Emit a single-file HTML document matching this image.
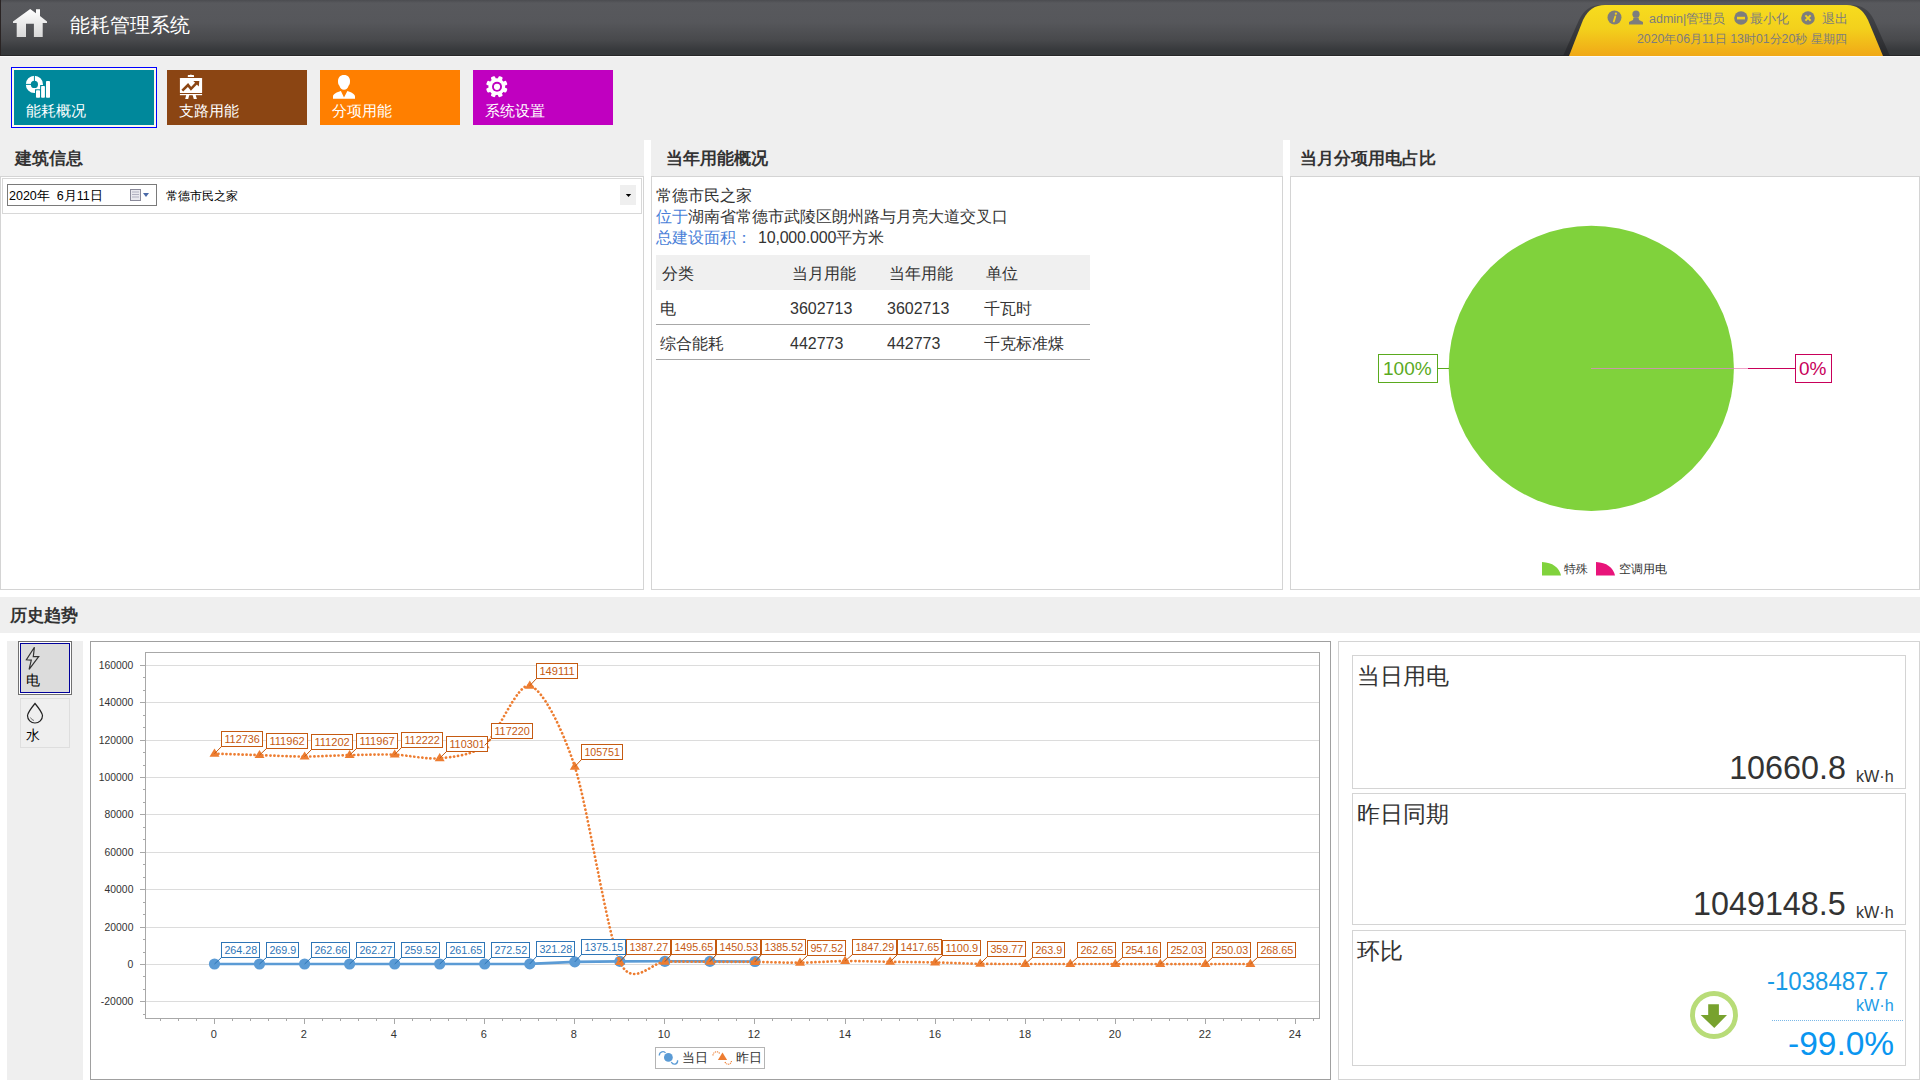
<!DOCTYPE html>
<html><head><meta charset="utf-8">
<style>
*{margin:0;padding:0;box-sizing:border-box}
html,body{width:1920px;height:1080px;overflow:hidden;background:#efefef;font-family:"Liberation Sans",sans-serif;color:#333}
.a{position:absolute}
svg text{font-family:"Liberation Sans",sans-serif}
.hdr{left:0;top:0;width:1920px;height:56px;background:linear-gradient(#4b4c50 0px,#58595d 3px,#56575b 22px,#48494c 40px,#37393c 50px,#35383a 55px,#272728 55px,#272728 56px);border-left:1px solid #2a2424}
.title{left:70px;top:11px;font-size:20px;color:#fff;line-height:28px;white-space:nowrap}
.tile{width:140px;height:55px;color:#fff;font-size:15px}
.tile span{position:absolute;left:12px;top:31px;line-height:20px;white-space:nowrap}
.ptitle{font-size:17px;font-weight:bold;color:#333;line-height:22px;white-space:nowrap}
.panel{background:#fff;border:1px solid #d4d4d4}
.t16{font-size:16px;line-height:21px;white-space:nowrap;color:#333}
.card{background:#fff;border:1px solid #d4d4d4}
.card .lbl{position:absolute;left:4px;top:5px;font-size:23px;line-height:30px;color:#333;white-space:nowrap}
</style></head><body>
<!-- header -->
<div class="a hdr"></div>
<div class="a" style="left:0;top:56px;width:1920px;height:1px;background:#fafafa"></div>
<svg class="a" style="left:12px;top:7px" width="36" height="32" viewBox="0 0 36 32">
<defs><linearGradient id="hg" x1="0" y1="0" x2="0" y2="1"><stop offset="0" stop-color="#ffffff"/><stop offset="1" stop-color="#d8d8d8"/></linearGradient></defs>
<path d="M1,14.5 L18.2,1.9 L24,6.2 L24,2.2 L28,2.2 L28,9.1 L35,14.5 L35,16 L30.7,16 L30.7,30 L21.9,30 L21.9,16.8 L14,16.8 L14,30 L4.7,30 L4.7,16 L1,16 Z" fill="url(#hg)"/>
</svg>
<div class="a title">能耗管理系统</div>
<!-- yellow tab -->
<svg class="a" style="left:1555px;top:0" width="340" height="56" viewBox="0 0 340 56">
<defs>
<linearGradient id="yg" x1="0" y1="0" x2="0" y2="1"><stop offset="0" stop-color="#f7dc1e"/><stop offset="0.45" stop-color="#f3d11c"/><stop offset="1" stop-color="#f0a817"/></linearGradient>
<linearGradient id="sg" x1="0" y1="0" x2="0" y2="1"><stop offset="0" stop-color="#3c3d41"/><stop offset="1" stop-color="#222326"/></linearGradient>
</defs>
<path d="M8,56 L24,20 Q31,5 46,5 L296,5 Q312,5 319,20 L335,56 Z" fill="url(#sg)" opacity="0.7"/>
<path d="M14,56 L28,20 Q35,5 50,5 L292,5 Q306,5 313,20 L328,56 Z" fill="url(#yg)"/>
</svg>
<!-- tab icons & text -->
<svg class="a" style="left:1607px;top:10px" width="15" height="15" viewBox="0 0 15 15"><circle cx="7.5" cy="7.5" r="7" fill="#7d7d7d"/><circle cx="8.9" cy="3.7" r="1.15" fill="#f3d11c"/><path d="M8.3,6.4 L6.8,11.4" stroke="#f3d11c" stroke-width="1.8" stroke-linecap="round"/></svg>
<svg class="a" style="left:1628px;top:10px" width="16" height="15" viewBox="0 0 16 15"><circle cx="8" cy="4.2" r="3.6" fill="#7d7d7d"/><path d="M5.5,7.5 L10.5,7.5 L11,10 L15,12 L15,14.5 L1,14.5 L1,12 L5,10 Z" fill="#7d7d7d"/></svg>
<div class="a" style="left:1649px;top:11px;font-size:12.5px;line-height:17px;color:#7d7d7d;white-space:nowrap">admin|管理员</div>
<svg class="a" style="left:1734px;top:11px" width="14" height="14" viewBox="0 0 14 14"><circle cx="7" cy="7" r="6.8" fill="#7d7d7d"/><rect x="3" y="5.8" width="8" height="2.6" fill="#f3d11c"/></svg>
<div class="a" style="left:1750px;top:11px;font-size:12.5px;line-height:17px;color:#7d7d7d;white-space:nowrap">最小化</div>
<svg class="a" style="left:1801px;top:11px" width="14" height="14" viewBox="0 0 14 14"><circle cx="7" cy="7" r="6.8" fill="#7d7d7d"/><path d="M4.4,4.4 L9.6,9.6 M9.6,4.4 L4.4,9.6" stroke="#f3d11c" stroke-width="2"/></svg>
<div class="a" style="left:1822px;top:11px;font-size:12.5px;line-height:17px;color:#7d7d7d;white-space:nowrap">退出</div>
<div class="a" style="left:1637px;top:31px;font-size:12.3px;line-height:17px;color:#7d7d7d;white-space:nowrap">2020年06月11日 13时01分20秒 星期四</div>

<!-- tiles -->
<div class="a" style="left:11px;top:67px;width:146px;height:61px;border:1px solid #0000ff;background:#fcfaec"></div>
<div class="a tile" style="left:14px;top:70px;background:#00889b">
<svg class="a" style="left:0;top:0" width="40" height="30" viewBox="0 0 40 30">
<circle cx="20.4" cy="14.4" r="6.1" fill="none" stroke="#fff" stroke-width="5"/>
<rect x="19.9" y="5" width="1" height="6" fill="#00889b"/>
<rect x="11" y="13.9" width="6" height="1" fill="#00889b"/>
<rect x="21" y="19.3" width="16" height="10" fill="#00889b"/>
<rect x="26.1" y="15" width="11" height="5" fill="#00889b"/>
<rect x="31" y="10" width="6" height="6" fill="#00889b"/>
<rect x="22" y="20.3" width="4" height="7.5" rx="0.8" fill="#fff"/><rect x="27.1" y="16" width="3.8" height="11.8" rx="0.8" fill="#fff"/><rect x="32" y="11" width="4" height="16.8" rx="0.8" fill="#fff"/>
</svg>
<span>能耗概况</span></div>
<div class="a tile" style="left:167px;top:70px;background:#8b4513">
<svg class="a" style="left:0;top:0" width="40" height="32" viewBox="0 0 40 32">
<g fill="#fff">
<path d="M20.8,7 L20.8,5.6 Q20.8,5 21.4,5 L22.8,5 Q23.9,3.8 25,5 L26.4,5 Q27,5 27,5.6 L27,7 Z"/>
<rect x="12.9" y="7.9" width="22.2" height="15.1" rx="0.6"/>
<rect x="12.9" y="24" width="22.2" height="1.2"/>
<path d="M19.2,25 L22.3,25 L21.2,29 L18.2,29 Z M25.6,25 L28.7,25 L29.9,29 L26.8,29 Z"/>
</g>
<path d="M15.3,20.6 L21,15 L24,18.8 L29.5,13.2" fill="none" stroke="#8b4513" stroke-width="2.6" stroke-linejoin="miter"/>
<path d="M26.3,10.9 L32.3,10.9 L31.8,16.6 Z" fill="#8b4513"/>
</svg>

<span>支路用能</span></div>
<div class="a tile" style="left:320px;top:70px;background:#ff7f00">
<svg class="a" style="left:0;top:0" width="40" height="32" viewBox="0 0 40 32">
<path d="M24,4.9 C28,4.9 30,7.5 30,11 C30,13 29.8,14.5 28.6,15.8 C27.8,18.4 26.2,19.8 24,19.8 C21.8,19.8 20.2,18.4 19.4,15.8 C18.2,14.5 18,13 18,11 C18,7.5 20,4.9 24,4.9 Z" fill="#fff"/>
<path d="M20.9,21 L24,27.5 L27.4,21 C31,22 35,24 35,26.5 L35,28.8 L13,28.8 L13,26.5 C13,24 17,22 20.9,21 Z" fill="#fff"/>
</svg>

<span>分项用能</span></div>
<div class="a tile" style="left:473px;top:70px;background:#c000c0">
<svg class="a" style="left:0;top:0" width="40" height="32" viewBox="0 0 40 32">
<g fill="#fff"><circle cx="23.8" cy="16.7" r="8.4"/><rect x="21.6" y="5.9" width="4.4" height="5" rx="1.2" transform="rotate(22.5 23.8 16.7)"/><rect x="21.6" y="5.9" width="4.4" height="5" rx="1.2" transform="rotate(67.5 23.8 16.7)"/><rect x="21.6" y="5.9" width="4.4" height="5" rx="1.2" transform="rotate(112.5 23.8 16.7)"/><rect x="21.6" y="5.9" width="4.4" height="5" rx="1.2" transform="rotate(157.5 23.8 16.7)"/><rect x="21.6" y="5.9" width="4.4" height="5" rx="1.2" transform="rotate(202.5 23.8 16.7)"/><rect x="21.6" y="5.9" width="4.4" height="5" rx="1.2" transform="rotate(247.5 23.8 16.7)"/><rect x="21.6" y="5.9" width="4.4" height="5" rx="1.2" transform="rotate(292.5 23.8 16.7)"/><rect x="21.6" y="5.9" width="4.4" height="5" rx="1.2" transform="rotate(337.5 23.8 16.7)"/></g>
<circle cx="24" cy="16.8" r="5" fill="#c000c0"/><circle cx="24" cy="16.8" r="3.1" fill="#fff"/>
</svg>

<span>系统设置</span></div>

<!-- white area behind panels -->
<div class="a" style="left:0;top:176px;width:1920px;height:421px;background:#fff"></div>
<div class="a" style="left:644px;top:140px;width:7px;height:457px;background:#fff"></div>
<div class="a" style="left:1283px;top:140px;width:7px;height:457px;background:#fff"></div>

<!-- panel titles -->
<div class="a ptitle" style="left:15px;top:148px">建筑信息</div>
<div class="a ptitle" style="left:666px;top:148px">当年用能概况</div>
<div class="a ptitle" style="left:1300px;top:148px">当月分项用电占比</div>

<!-- panels -->
<div class="a panel" style="left:0;top:176px;width:644px;height:414px"></div>
<div class="a panel" style="left:651px;top:176px;width:632px;height:414px"></div>
<div class="a panel" style="left:1290px;top:176px;width:630px;height:414px"></div>

<!-- left panel content -->
<div class="a" style="left:2px;top:178px;width:640px;height:36px;border:1px solid #d8d8d8;background:#fff"></div>
<div class="a" style="left:7px;top:184px;width:150px;height:22px;border:1px solid #7a7a7a;background:#fff"></div>
<div class="a" style="left:9px;top:188px;font-size:12.5px;line-height:17px;color:#000;white-space:nowrap">2020年&nbsp; 6月11日</div>
<svg class="a" style="left:129px;top:188px" width="22" height="14" viewBox="0 0 22 14"><rect x="1.5" y="1.5" width="10" height="11" fill="#e8e8ee" stroke="#8a8a9a"/><path d="M3,4 h7 M3,6.5 h7 M3,9 h7" stroke="#b0b0c0"/><path d="M14,5 L20,5 L17,9 Z" fill="#4a6aa8"/></svg>
<div class="a" style="left:166px;top:188px;font-size:12px;line-height:17px;color:#000;white-space:nowrap">常德市民之家</div>
<div class="a" style="left:620px;top:185px;width:16px;height:20px;background:#efefef"></div>
<svg class="a" style="left:625px;top:193px" width="8" height="5" viewBox="0 0 8 5"><path d="M0.8,0.9 L6.2,0.9 L3.5,3.9 Z" fill="#000"/></svg>

<!-- middle panel content -->
<div class="a t16" style="left:656px;top:185px">常德市民之家</div>
<div class="a t16" style="left:656px;top:206px"><span style="color:#4a7fd8">位于</span>湖南省常德市武陵区朗州路与月亮大道交叉口</div>
<div class="a t16" style="left:656px;top:227px"><span style="color:#4a7fd8">总建设面积：</span></div><div class="a t16" style="left:758px;top:227px;letter-spacing:-0.2px">10,000.000平方米</div>
<div class="a" style="left:656px;top:255px;width:434px;height:35px;background:#f0f0f0"></div>
<div class="a" style="left:656px;top:324px;width:434px;height:1px;background:#a8a8a8"></div>
<div class="a" style="left:656px;top:359px;width:434px;height:1px;background:#a8a8a8"></div>
<div class="a t16" style="left:662px;top:263px">分类</div>
<div class="a t16" style="left:792px;top:263px">当月用能</div>
<div class="a t16" style="left:889px;top:263px">当年用能</div>
<div class="a t16" style="left:986px;top:263px">单位</div>
<div class="a t16" style="left:660px;top:298px">电</div>
<div class="a t16" style="left:790px;top:298px">3602713</div>
<div class="a t16" style="left:887px;top:298px">3602713</div>
<div class="a t16" style="left:984px;top:298px">千瓦时</div>
<div class="a t16" style="left:660px;top:333px">综合能耗</div>
<div class="a t16" style="left:790px;top:333px">442773</div>
<div class="a t16" style="left:887px;top:333px">442773</div>
<div class="a t16" style="left:984px;top:333px">千克标准煤</div>

<!-- pie panel content -->
<svg class="a" style="left:1291px;top:177px" width="628" height="412" viewBox="1291 177 628 412">
<circle cx="1591.3" cy="368.4" r="142.6" fill="#80d23c"/>
<line x1="1591" y1="368.5" x2="1734" y2="368.5" stroke="#c89aa8" stroke-width="1"/>
<line x1="1734" y1="368.5" x2="1748" y2="368.5" stroke="#f0a0c8" stroke-width="1"/>
<line x1="1748" y1="368.5" x2="1796" y2="368.5" stroke="#c8005a" stroke-width="1"/>
<line x1="1437" y1="368.5" x2="1449" y2="368.5" stroke="#5aaa1e" stroke-width="1"/>
<rect x="1378.5" y="354.5" width="59" height="28" fill="#fff" stroke="#5aaa1e"/>
<text x="1383" y="375" font-size="19" fill="#5aaa1e">100%</text>
<rect x="1795.5" y="354.5" width="36" height="28" fill="#fff" stroke="#c8005a"/>
<text x="1799" y="375" font-size="19" fill="#c8005a">0%</text>
<path d="M1542,562 Q1558,563 1561,575.5 L1542,575.5 Z" fill="#80d23c"/>
<path d="M1596,562 Q1612,563 1615,575.5 L1596,575.5 Z" fill="#e8147a"/>
<text x="1564" y="573" font-size="12" fill="#333">特殊</text>
<text x="1619" y="573" font-size="12" fill="#333">空调用电</text>
</svg>

<!-- history header -->
<div class="a" style="left:0;top:633px;width:1920px;height:447px;background:#fff"></div>
<div class="a ptitle" style="left:10px;top:605px">历史趋势</div>

<!-- sidebar -->
<div class="a" style="left:7px;top:641px;width:76px;height:439px;background:#efefef"></div>
<div class="a" style="left:18px;top:641px;width:54px;height:54px;border:1px solid #707070;background:#fff"></div>
<div class="a" style="left:20px;top:643px;width:50px;height:50px;border:1px solid #00009a;background:#dcdcdc"></div>
<svg class="a" style="left:25px;top:646px" width="16" height="26" viewBox="0 0 16 26"><path d="M9.4,1.3 L1.4,13.8 L6.3,14.1 L4.1,23.3 L13.7,10.7 L8.3,10.6 Z" fill="none" stroke="#333" stroke-width="1.2" stroke-linejoin="miter"/></svg>
<div class="a" style="left:26px;top:671.5px;font-size:13.5px;line-height:17px;color:#000">电</div>
<div class="a" style="left:20px;top:698px;width:50px;height:50px;border:1px solid #dedede;background:#efefef"></div>
<svg class="a" style="left:25px;top:702px" width="20" height="22" viewBox="0 0 20 22"><path d="M10,1.5 Q3,10 2.5,13.5 A7.5,7.5 0 0 0 17.5,13.5 Q17,10 10,1.5 Z" fill="none" stroke="#222" stroke-width="1.2"/><path d="M5.5,15.5 Q6.5,18 9,18.5" fill="none" stroke="#555" stroke-width="0.8"/></svg>
<div class="a" style="left:26px;top:726.5px;font-size:13.5px;line-height:17px;color:#000">水</div>

<!-- chart -->
<div class="a" style="left:90px;top:641px;width:1241px;height:439px;border:1px solid #a0a0a0;background:#fff"></div>
<svg width="1241" height="439" viewBox="90 641 1241 439" style="position:absolute;left:90px;top:641px">
<rect x="145.5" y="652.5" width="1174" height="366" fill="#fff" stroke="#a8a8a8" stroke-width="1"/>
<line x1="146" y1="1001.5" x2="1319" y2="1001.5" stroke="#dcdcdc" stroke-width="1"/>
<line x1="140" y1="1001.5" x2="145" y2="1001.5" stroke="#a8a8a8" stroke-width="1"/>
<text x="100.8" y="1005.3" font-size="11" fill="#333" textLength="32.5" lengthAdjust="spacingAndGlyphs">-20000</text>
<line x1="146" y1="964.5" x2="1319" y2="964.5" stroke="#dcdcdc" stroke-width="1"/>
<line x1="140" y1="964.5" x2="145" y2="964.5" stroke="#a8a8a8" stroke-width="1"/>
<text x="127.6" y="968.3" font-size="11" fill="#333" textLength="5.8" lengthAdjust="spacingAndGlyphs">0</text>
<line x1="146" y1="927.5" x2="1319" y2="927.5" stroke="#dcdcdc" stroke-width="1"/>
<line x1="140" y1="927.5" x2="145" y2="927.5" stroke="#a8a8a8" stroke-width="1"/>
<text x="104.6" y="931.3" font-size="11" fill="#333" textLength="28.8" lengthAdjust="spacingAndGlyphs">20000</text>
<line x1="146" y1="889.5" x2="1319" y2="889.5" stroke="#dcdcdc" stroke-width="1"/>
<line x1="140" y1="889.5" x2="145" y2="889.5" stroke="#a8a8a8" stroke-width="1"/>
<text x="104.6" y="893.3" font-size="11" fill="#333" textLength="28.8" lengthAdjust="spacingAndGlyphs">40000</text>
<line x1="146" y1="852.5" x2="1319" y2="852.5" stroke="#dcdcdc" stroke-width="1"/>
<line x1="140" y1="852.5" x2="145" y2="852.5" stroke="#a8a8a8" stroke-width="1"/>
<text x="104.6" y="856.3" font-size="11" fill="#333" textLength="28.8" lengthAdjust="spacingAndGlyphs">60000</text>
<line x1="146" y1="814.5" x2="1319" y2="814.5" stroke="#dcdcdc" stroke-width="1"/>
<line x1="140" y1="814.5" x2="145" y2="814.5" stroke="#a8a8a8" stroke-width="1"/>
<text x="104.6" y="818.3" font-size="11" fill="#333" textLength="28.8" lengthAdjust="spacingAndGlyphs">80000</text>
<line x1="146" y1="777.5" x2="1319" y2="777.5" stroke="#dcdcdc" stroke-width="1"/>
<line x1="140" y1="777.5" x2="145" y2="777.5" stroke="#a8a8a8" stroke-width="1"/>
<text x="98.8" y="781.3" font-size="11" fill="#333" textLength="34.5" lengthAdjust="spacingAndGlyphs">100000</text>
<line x1="146" y1="740.5" x2="1319" y2="740.5" stroke="#dcdcdc" stroke-width="1"/>
<line x1="140" y1="740.5" x2="145" y2="740.5" stroke="#a8a8a8" stroke-width="1"/>
<text x="98.8" y="744.3" font-size="11" fill="#333" textLength="34.5" lengthAdjust="spacingAndGlyphs">120000</text>
<line x1="146" y1="702.5" x2="1319" y2="702.5" stroke="#dcdcdc" stroke-width="1"/>
<line x1="140" y1="702.5" x2="145" y2="702.5" stroke="#a8a8a8" stroke-width="1"/>
<text x="98.8" y="706.3" font-size="11" fill="#333" textLength="34.5" lengthAdjust="spacingAndGlyphs">140000</text>
<line x1="146" y1="665.5" x2="1319" y2="665.5" stroke="#dcdcdc" stroke-width="1"/>
<line x1="140" y1="665.5" x2="145" y2="665.5" stroke="#a8a8a8" stroke-width="1"/>
<text x="98.8" y="669.3" font-size="11" fill="#333" textLength="34.5" lengthAdjust="spacingAndGlyphs">160000</text>
<line x1="143" y1="1014.5" x2="145" y2="1014.5" stroke="#a8a8a8"/>
<line x1="143" y1="989.5" x2="145" y2="989.5" stroke="#a8a8a8"/>
<line x1="143" y1="976.5" x2="145" y2="976.5" stroke="#a8a8a8"/>
<line x1="143" y1="952.5" x2="145" y2="952.5" stroke="#a8a8a8"/>
<line x1="143" y1="939.5" x2="145" y2="939.5" stroke="#a8a8a8"/>
<line x1="143" y1="914.5" x2="145" y2="914.5" stroke="#a8a8a8"/>
<line x1="143" y1="902.5" x2="145" y2="902.5" stroke="#a8a8a8"/>
<line x1="143" y1="877.5" x2="145" y2="877.5" stroke="#a8a8a8"/>
<line x1="143" y1="864.5" x2="145" y2="864.5" stroke="#a8a8a8"/>
<line x1="143" y1="839.5" x2="145" y2="839.5" stroke="#a8a8a8"/>
<line x1="143" y1="827.5" x2="145" y2="827.5" stroke="#a8a8a8"/>
<line x1="143" y1="802.5" x2="145" y2="802.5" stroke="#a8a8a8"/>
<line x1="143" y1="789.5" x2="145" y2="789.5" stroke="#a8a8a8"/>
<line x1="143" y1="765.5" x2="145" y2="765.5" stroke="#a8a8a8"/>
<line x1="143" y1="752.5" x2="145" y2="752.5" stroke="#a8a8a8"/>
<line x1="143" y1="727.5" x2="145" y2="727.5" stroke="#a8a8a8"/>
<line x1="143" y1="715.5" x2="145" y2="715.5" stroke="#a8a8a8"/>
<line x1="143" y1="690.5" x2="145" y2="690.5" stroke="#a8a8a8"/>
<line x1="143" y1="677.5" x2="145" y2="677.5" stroke="#a8a8a8"/>
<line x1="160.5" y1="1018" x2="160.5" y2="1021" stroke="#a8a8a8"/>
<line x1="178.5" y1="1018" x2="178.5" y2="1021" stroke="#a8a8a8"/>
<line x1="196.5" y1="1018" x2="196.5" y2="1021" stroke="#a8a8a8"/>
<line x1="214.5" y1="1018" x2="214.5" y2="1024" stroke="#a8a8a8"/>
<text x="213.9" y="1038" text-anchor="middle" font-size="11" fill="#333">0</text>
<line x1="232.5" y1="1018" x2="232.5" y2="1021" stroke="#a8a8a8"/>
<line x1="250.5" y1="1018" x2="250.5" y2="1021" stroke="#a8a8a8"/>
<line x1="268.5" y1="1018" x2="268.5" y2="1021" stroke="#a8a8a8"/>
<line x1="286.5" y1="1018" x2="286.5" y2="1021" stroke="#a8a8a8"/>
<line x1="304.5" y1="1018" x2="304.5" y2="1024" stroke="#a8a8a8"/>
<text x="303.9" y="1038" text-anchor="middle" font-size="11" fill="#333">2</text>
<line x1="322.5" y1="1018" x2="322.5" y2="1021" stroke="#a8a8a8"/>
<line x1="340.5" y1="1018" x2="340.5" y2="1021" stroke="#a8a8a8"/>
<line x1="358.5" y1="1018" x2="358.5" y2="1021" stroke="#a8a8a8"/>
<line x1="376.5" y1="1018" x2="376.5" y2="1021" stroke="#a8a8a8"/>
<line x1="394.5" y1="1018" x2="394.5" y2="1024" stroke="#a8a8a8"/>
<text x="393.9" y="1038" text-anchor="middle" font-size="11" fill="#333">4</text>
<line x1="412.5" y1="1018" x2="412.5" y2="1021" stroke="#a8a8a8"/>
<line x1="430.5" y1="1018" x2="430.5" y2="1021" stroke="#a8a8a8"/>
<line x1="448.5" y1="1018" x2="448.5" y2="1021" stroke="#a8a8a8"/>
<line x1="466.5" y1="1018" x2="466.5" y2="1021" stroke="#a8a8a8"/>
<line x1="484.5" y1="1018" x2="484.5" y2="1024" stroke="#a8a8a8"/>
<text x="483.9" y="1038" text-anchor="middle" font-size="11" fill="#333">6</text>
<line x1="502.5" y1="1018" x2="502.5" y2="1021" stroke="#a8a8a8"/>
<line x1="520.5" y1="1018" x2="520.5" y2="1021" stroke="#a8a8a8"/>
<line x1="538.5" y1="1018" x2="538.5" y2="1021" stroke="#a8a8a8"/>
<line x1="556.5" y1="1018" x2="556.5" y2="1021" stroke="#a8a8a8"/>
<line x1="574.5" y1="1018" x2="574.5" y2="1024" stroke="#a8a8a8"/>
<text x="573.9" y="1038" text-anchor="middle" font-size="11" fill="#333">8</text>
<line x1="592.5" y1="1018" x2="592.5" y2="1021" stroke="#a8a8a8"/>
<line x1="610.5" y1="1018" x2="610.5" y2="1021" stroke="#a8a8a8"/>
<line x1="628.5" y1="1018" x2="628.5" y2="1021" stroke="#a8a8a8"/>
<line x1="646.5" y1="1018" x2="646.5" y2="1021" stroke="#a8a8a8"/>
<line x1="664.5" y1="1018" x2="664.5" y2="1024" stroke="#a8a8a8"/>
<text x="663.9" y="1038" text-anchor="middle" font-size="11" fill="#333">10</text>
<line x1="682.5" y1="1018" x2="682.5" y2="1021" stroke="#a8a8a8"/>
<line x1="700.5" y1="1018" x2="700.5" y2="1021" stroke="#a8a8a8"/>
<line x1="718.5" y1="1018" x2="718.5" y2="1021" stroke="#a8a8a8"/>
<line x1="736.5" y1="1018" x2="736.5" y2="1021" stroke="#a8a8a8"/>
<line x1="754.5" y1="1018" x2="754.5" y2="1024" stroke="#a8a8a8"/>
<text x="753.9" y="1038" text-anchor="middle" font-size="11" fill="#333">12</text>
<line x1="772.5" y1="1018" x2="772.5" y2="1021" stroke="#a8a8a8"/>
<line x1="791.5" y1="1018" x2="791.5" y2="1021" stroke="#a8a8a8"/>
<line x1="809.5" y1="1018" x2="809.5" y2="1021" stroke="#a8a8a8"/>
<line x1="827.5" y1="1018" x2="827.5" y2="1021" stroke="#a8a8a8"/>
<line x1="845.5" y1="1018" x2="845.5" y2="1024" stroke="#a8a8a8"/>
<text x="844.9" y="1038" text-anchor="middle" font-size="11" fill="#333">14</text>
<line x1="863.5" y1="1018" x2="863.5" y2="1021" stroke="#a8a8a8"/>
<line x1="881.5" y1="1018" x2="881.5" y2="1021" stroke="#a8a8a8"/>
<line x1="899.5" y1="1018" x2="899.5" y2="1021" stroke="#a8a8a8"/>
<line x1="917.5" y1="1018" x2="917.5" y2="1021" stroke="#a8a8a8"/>
<line x1="935.5" y1="1018" x2="935.5" y2="1024" stroke="#a8a8a8"/>
<text x="934.9" y="1038" text-anchor="middle" font-size="11" fill="#333">16</text>
<line x1="953.5" y1="1018" x2="953.5" y2="1021" stroke="#a8a8a8"/>
<line x1="971.5" y1="1018" x2="971.5" y2="1021" stroke="#a8a8a8"/>
<line x1="989.5" y1="1018" x2="989.5" y2="1021" stroke="#a8a8a8"/>
<line x1="1007.5" y1="1018" x2="1007.5" y2="1021" stroke="#a8a8a8"/>
<line x1="1025.5" y1="1018" x2="1025.5" y2="1024" stroke="#a8a8a8"/>
<text x="1024.9" y="1038" text-anchor="middle" font-size="11" fill="#333">18</text>
<line x1="1043.5" y1="1018" x2="1043.5" y2="1021" stroke="#a8a8a8"/>
<line x1="1061.5" y1="1018" x2="1061.5" y2="1021" stroke="#a8a8a8"/>
<line x1="1079.5" y1="1018" x2="1079.5" y2="1021" stroke="#a8a8a8"/>
<line x1="1097.5" y1="1018" x2="1097.5" y2="1021" stroke="#a8a8a8"/>
<line x1="1115.5" y1="1018" x2="1115.5" y2="1024" stroke="#a8a8a8"/>
<text x="1114.9" y="1038" text-anchor="middle" font-size="11" fill="#333">20</text>
<line x1="1133.5" y1="1018" x2="1133.5" y2="1021" stroke="#a8a8a8"/>
<line x1="1151.5" y1="1018" x2="1151.5" y2="1021" stroke="#a8a8a8"/>
<line x1="1169.5" y1="1018" x2="1169.5" y2="1021" stroke="#a8a8a8"/>
<line x1="1187.5" y1="1018" x2="1187.5" y2="1021" stroke="#a8a8a8"/>
<line x1="1205.5" y1="1018" x2="1205.5" y2="1024" stroke="#a8a8a8"/>
<text x="1204.9" y="1038" text-anchor="middle" font-size="11" fill="#333">22</text>
<line x1="1223.5" y1="1018" x2="1223.5" y2="1021" stroke="#a8a8a8"/>
<line x1="1241.5" y1="1018" x2="1241.5" y2="1021" stroke="#a8a8a8"/>
<line x1="1259.5" y1="1018" x2="1259.5" y2="1021" stroke="#a8a8a8"/>
<line x1="1277.5" y1="1018" x2="1277.5" y2="1021" stroke="#a8a8a8"/>
<line x1="1295.5" y1="1018" x2="1295.5" y2="1024" stroke="#a8a8a8"/>
<text x="1294.9" y="1038" text-anchor="middle" font-size="11" fill="#333">24</text>
<line x1="1313.5" y1="1018" x2="1313.5" y2="1021" stroke="#a8a8a8"/>
<polyline points="214.5,964.0 259.5,964.0 304.6,964.0 349.6,964.0 394.7,964.0 439.7,964.0 484.7,964.0 529.8,963.9 574.8,961.9 619.9,961.4 664.9,961.3 709.9,961.4 755.0,961.5" fill="none" stroke="#5b9bd5" stroke-width="2.6"/>
<circle cx="214.5" cy="964.0" r="5.6" fill="#5b9bd5"/>
<circle cx="259.5" cy="964.0" r="5.6" fill="#5b9bd5"/>
<circle cx="304.6" cy="964.0" r="5.6" fill="#5b9bd5"/>
<circle cx="349.6" cy="964.0" r="5.6" fill="#5b9bd5"/>
<circle cx="394.7" cy="964.0" r="5.6" fill="#5b9bd5"/>
<circle cx="439.7" cy="964.0" r="5.6" fill="#5b9bd5"/>
<circle cx="484.7" cy="964.0" r="5.6" fill="#5b9bd5"/>
<circle cx="529.8" cy="963.9" r="5.6" fill="#5b9bd5"/>
<circle cx="574.8" cy="961.9" r="5.6" fill="#5b9bd5"/>
<circle cx="619.9" cy="961.4" r="5.6" fill="#5b9bd5"/>
<circle cx="664.9" cy="961.3" r="5.6" fill="#5b9bd5"/>
<circle cx="709.9" cy="961.4" r="5.6" fill="#5b9bd5"/>
<circle cx="755.0" cy="961.5" r="5.6" fill="#5b9bd5"/>
<path d="M214.50,753.68 C220.81,753.89 246.93,754.73 259.54,755.13 C272.15,755.53 291.97,756.55 304.58,756.55 C317.19,756.55 337.01,755.39 349.62,755.12 C362.23,754.85 382.05,754.21 394.66,754.64 C407.27,755.08 427.09,759.55 439.70,758.24 C452.31,756.93 472.13,755.46 484.74,745.30 C497.35,735.14 517.17,682.66 529.78,685.66 C542.39,688.67 562.21,728.07 574.82,766.75 C587.43,805.42 607.25,934.61 619.86,961.91 C632.47,989.20 652.29,961.72 664.90,961.70 C677.51,961.69 697.33,961.76 709.94,961.79 C722.55,961.82 742.37,961.78 754.98,961.91 C767.59,962.04 787.41,962.83 800.02,962.71 C812.63,962.59 832.45,961.17 845.06,961.05 C857.67,960.93 877.49,961.65 890.10,961.85 C902.71,962.04 922.53,962.16 935.14,962.44 C947.75,962.72 967.57,963.61 980.18,963.83 C992.79,964.05 1012.61,963.98 1025.22,964.01 C1037.83,964.03 1057.65,964.01 1070.26,964.01 C1082.87,964.01 1102.69,964.02 1115.30,964.02 C1127.91,964.03 1147.73,964.03 1160.34,964.03 C1172.95,964.03 1192.77,964.04 1205.38,964.03 C1217.99,964.03 1244.11,964.00 1250.42,964.00" fill="none" stroke="#ed7d31" stroke-width="2.7" stroke-dasharray="0.1 3.9" stroke-linecap="round"/>
<polygon points="214.5,748.5 209.5,756.7 219.5,756.7" fill="#ed7d31"/>
<polygon points="259.5,749.9 254.5,758.1 264.5,758.1" fill="#ed7d31"/>
<polygon points="304.6,751.4 299.6,759.6 309.6,759.6" fill="#ed7d31"/>
<polygon points="349.6,749.9 344.6,758.1 354.6,758.1" fill="#ed7d31"/>
<polygon points="394.7,749.4 389.7,757.6 399.7,757.6" fill="#ed7d31"/>
<polygon points="439.7,753.0 434.7,761.2 444.7,761.2" fill="#ed7d31"/>
<polygon points="484.7,740.1 479.7,748.3 489.7,748.3" fill="#ed7d31"/>
<polygon points="529.8,680.5 524.8,688.7 534.8,688.7" fill="#ed7d31"/>
<polygon points="574.8,761.5 569.8,769.7 579.8,769.7" fill="#ed7d31"/>
<polygon points="619.9,956.7 614.9,964.9 624.9,964.9" fill="#ed7d31"/>
<polygon points="664.9,956.5 659.9,964.7 669.9,964.7" fill="#ed7d31"/>
<polygon points="709.9,956.6 704.9,964.8 714.9,964.8" fill="#ed7d31"/>
<polygon points="755.0,956.7 750.0,964.9 760.0,964.9" fill="#ed7d31"/>
<polygon points="800.0,957.5 795.0,965.7 805.0,965.7" fill="#ed7d31"/>
<polygon points="845.1,955.8 840.1,964.0 850.1,964.0" fill="#ed7d31"/>
<polygon points="890.1,956.6 885.1,964.8 895.1,964.8" fill="#ed7d31"/>
<polygon points="935.1,957.2 930.1,965.4 940.1,965.4" fill="#ed7d31"/>
<polygon points="980.2,958.6 975.2,966.8 985.2,966.8" fill="#ed7d31"/>
<polygon points="1025.2,958.8 1020.2,967.0 1030.2,967.0" fill="#ed7d31"/>
<polygon points="1070.3,958.8 1065.3,967.0 1075.3,967.0" fill="#ed7d31"/>
<polygon points="1115.3,958.8 1110.3,967.0 1120.3,967.0" fill="#ed7d31"/>
<polygon points="1160.3,958.8 1155.3,967.0 1165.3,967.0" fill="#ed7d31"/>
<polygon points="1205.4,958.8 1200.4,967.0 1210.4,967.0" fill="#ed7d31"/>
<polygon points="1250.4,958.8 1245.4,967.0 1255.4,967.0" fill="#ed7d31"/>
<line x1="214.5" y1="964.0" x2="221.5" y2="957.5" stroke="#2e75b6" stroke-width="1"/>
<rect x="221.5" y="942.5" width="38" height="15" fill="#fff" stroke="#2e75b6" stroke-width="1"/>
<text x="224.4" y="954.0" font-size="11" fill="#2e75b6" textLength="32.8" lengthAdjust="spacingAndGlyphs">264.28</text>
<line x1="259.5" y1="964.0" x2="266.5" y2="957.5" stroke="#2e75b6" stroke-width="1"/>
<rect x="266.5" y="942.5" width="32" height="15" fill="#fff" stroke="#2e75b6" stroke-width="1"/>
<text x="269.4" y="954.0" font-size="11" fill="#2e75b6" textLength="26.9" lengthAdjust="spacingAndGlyphs">269.9</text>
<line x1="304.6" y1="964.0" x2="311.5" y2="957.5" stroke="#2e75b6" stroke-width="1"/>
<rect x="311.5" y="942.5" width="38" height="15" fill="#fff" stroke="#2e75b6" stroke-width="1"/>
<text x="314.4" y="954.0" font-size="11" fill="#2e75b6" textLength="32.8" lengthAdjust="spacingAndGlyphs">262.66</text>
<line x1="349.6" y1="964.0" x2="356.5" y2="957.5" stroke="#2e75b6" stroke-width="1"/>
<rect x="356.5" y="942.5" width="38" height="15" fill="#fff" stroke="#2e75b6" stroke-width="1"/>
<text x="359.4" y="954.0" font-size="11" fill="#2e75b6" textLength="32.8" lengthAdjust="spacingAndGlyphs">262.27</text>
<line x1="394.7" y1="964.0" x2="401.5" y2="957.5" stroke="#2e75b6" stroke-width="1"/>
<rect x="401.5" y="942.5" width="38" height="15" fill="#fff" stroke="#2e75b6" stroke-width="1"/>
<text x="404.4" y="954.0" font-size="11" fill="#2e75b6" textLength="32.8" lengthAdjust="spacingAndGlyphs">259.52</text>
<line x1="439.7" y1="964.0" x2="446.5" y2="957.5" stroke="#2e75b6" stroke-width="1"/>
<rect x="446.5" y="942.5" width="38" height="15" fill="#fff" stroke="#2e75b6" stroke-width="1"/>
<text x="449.4" y="954.0" font-size="11" fill="#2e75b6" textLength="32.8" lengthAdjust="spacingAndGlyphs">261.65</text>
<line x1="484.7" y1="964.0" x2="491.5" y2="957.5" stroke="#2e75b6" stroke-width="1"/>
<rect x="491.5" y="942.5" width="38" height="15" fill="#fff" stroke="#2e75b6" stroke-width="1"/>
<text x="494.4" y="954.0" font-size="11" fill="#2e75b6" textLength="32.8" lengthAdjust="spacingAndGlyphs">272.52</text>
<line x1="529.8" y1="963.9" x2="536.5" y2="956.5" stroke="#2e75b6" stroke-width="1"/>
<rect x="536.5" y="941.5" width="38" height="15" fill="#fff" stroke="#2e75b6" stroke-width="1"/>
<text x="539.4" y="953.0" font-size="11" fill="#2e75b6" textLength="32.8" lengthAdjust="spacingAndGlyphs">321.28</text>
<line x1="574.8" y1="961.9" x2="581.5" y2="954.5" stroke="#2e75b6" stroke-width="1"/>
<rect x="581.5" y="939.5" width="44" height="15" fill="#fff" stroke="#2e75b6" stroke-width="1"/>
<text x="584.4" y="951.0" font-size="11" fill="#2e75b6" textLength="38.7" lengthAdjust="spacingAndGlyphs">1375.15</text>
<line x1="619.9" y1="961.4" x2="626.5" y2="954.5" stroke="#2e75b6" stroke-width="1"/>
<rect x="626.5" y="939.5" width="29" height="15" fill="#fff" stroke="#2e75b6" stroke-width="1"/>
<text x="629.4" y="951.0" font-size="11" fill="#2e75b6" textLength="23.6" lengthAdjust="spacingAndGlyphs">1380</text>
<line x1="664.9" y1="961.3" x2="671.5" y2="954.5" stroke="#2e75b6" stroke-width="1"/>
<rect x="671.5" y="939.5" width="29" height="15" fill="#fff" stroke="#2e75b6" stroke-width="1"/>
<text x="674.4" y="951.0" font-size="11" fill="#2e75b6" textLength="23.6" lengthAdjust="spacingAndGlyphs">1480</text>
<line x1="709.9" y1="961.4" x2="716.5" y2="954.5" stroke="#2e75b6" stroke-width="1"/>
<rect x="716.5" y="939.5" width="29" height="15" fill="#fff" stroke="#2e75b6" stroke-width="1"/>
<text x="719.4" y="951.0" font-size="11" fill="#2e75b6" textLength="23.6" lengthAdjust="spacingAndGlyphs">1440</text>
<line x1="755.0" y1="961.5" x2="761.5" y2="954.5" stroke="#2e75b6" stroke-width="1"/>
<rect x="761.5" y="939.5" width="29" height="15" fill="#fff" stroke="#2e75b6" stroke-width="1"/>
<text x="764.4" y="951.0" font-size="11" fill="#2e75b6" textLength="23.6" lengthAdjust="spacingAndGlyphs">1400</text>
<line x1="214.5" y1="753.7" x2="221.5" y2="746.5" stroke="#c55a11" stroke-width="1"/>
<rect x="221.5" y="731.5" width="41" height="15" fill="#fff" stroke="#c55a11" stroke-width="1"/>
<text x="224.4" y="743.0" font-size="11" fill="#c55a11" textLength="35.4" lengthAdjust="spacingAndGlyphs">112736</text>
<line x1="259.5" y1="755.1" x2="266.5" y2="748.5" stroke="#c55a11" stroke-width="1"/>
<rect x="266.5" y="733.5" width="41" height="15" fill="#fff" stroke="#c55a11" stroke-width="1"/>
<text x="269.4" y="745.0" font-size="11" fill="#c55a11" textLength="35.4" lengthAdjust="spacingAndGlyphs">111962</text>
<line x1="304.6" y1="756.6" x2="311.5" y2="749.5" stroke="#c55a11" stroke-width="1"/>
<rect x="311.5" y="734.5" width="41" height="15" fill="#fff" stroke="#c55a11" stroke-width="1"/>
<text x="314.4" y="746.0" font-size="11" fill="#c55a11" textLength="35.4" lengthAdjust="spacingAndGlyphs">111202</text>
<line x1="349.6" y1="755.1" x2="356.5" y2="748.5" stroke="#c55a11" stroke-width="1"/>
<rect x="356.5" y="733.5" width="41" height="15" fill="#fff" stroke="#c55a11" stroke-width="1"/>
<text x="359.4" y="745.0" font-size="11" fill="#c55a11" textLength="35.4" lengthAdjust="spacingAndGlyphs">111967</text>
<line x1="394.7" y1="754.6" x2="401.5" y2="747.5" stroke="#c55a11" stroke-width="1"/>
<rect x="401.5" y="732.5" width="41" height="15" fill="#fff" stroke="#c55a11" stroke-width="1"/>
<text x="404.4" y="744.0" font-size="11" fill="#c55a11" textLength="35.4" lengthAdjust="spacingAndGlyphs">112222</text>
<line x1="439.7" y1="758.2" x2="446.5" y2="751.5" stroke="#c55a11" stroke-width="1"/>
<rect x="446.5" y="736.5" width="41" height="15" fill="#fff" stroke="#c55a11" stroke-width="1"/>
<text x="449.4" y="748.0" font-size="11" fill="#c55a11" textLength="35.4" lengthAdjust="spacingAndGlyphs">110301</text>
<line x1="484.7" y1="745.3" x2="491.5" y2="738.5" stroke="#c55a11" stroke-width="1"/>
<rect x="491.5" y="723.5" width="41" height="15" fill="#fff" stroke="#c55a11" stroke-width="1"/>
<text x="494.4" y="735.0" font-size="11" fill="#c55a11" textLength="35.4" lengthAdjust="spacingAndGlyphs">117220</text>
<line x1="529.8" y1="685.7" x2="536.5" y2="678.5" stroke="#c55a11" stroke-width="1"/>
<rect x="536.5" y="663.5" width="41" height="15" fill="#fff" stroke="#c55a11" stroke-width="1"/>
<text x="539.4" y="675.0" font-size="11" fill="#c55a11" textLength="35.4" lengthAdjust="spacingAndGlyphs">149111</text>
<line x1="574.8" y1="766.7" x2="581.5" y2="759.5" stroke="#c55a11" stroke-width="1"/>
<rect x="581.5" y="744.5" width="41" height="15" fill="#fff" stroke="#c55a11" stroke-width="1"/>
<text x="584.4" y="756.0" font-size="11" fill="#c55a11" textLength="35.4" lengthAdjust="spacingAndGlyphs">105751</text>
<line x1="619.9" y1="961.9" x2="626.5" y2="954.5" stroke="#c55a11" stroke-width="1"/>
<rect x="626.5" y="939.5" width="44" height="15" fill="#fff" stroke="#c55a11" stroke-width="1"/>
<text x="629.4" y="951.0" font-size="11" fill="#c55a11" textLength="38.7" lengthAdjust="spacingAndGlyphs">1387.27</text>
<line x1="664.9" y1="961.7" x2="671.5" y2="954.5" stroke="#c55a11" stroke-width="1"/>
<rect x="671.5" y="939.5" width="44" height="15" fill="#fff" stroke="#c55a11" stroke-width="1"/>
<text x="674.4" y="951.0" font-size="11" fill="#c55a11" textLength="38.7" lengthAdjust="spacingAndGlyphs">1495.65</text>
<line x1="709.9" y1="961.8" x2="716.5" y2="954.5" stroke="#c55a11" stroke-width="1"/>
<rect x="716.5" y="939.5" width="44" height="15" fill="#fff" stroke="#c55a11" stroke-width="1"/>
<text x="719.4" y="951.0" font-size="11" fill="#c55a11" textLength="38.7" lengthAdjust="spacingAndGlyphs">1450.53</text>
<line x1="755.0" y1="961.9" x2="761.5" y2="954.5" stroke="#c55a11" stroke-width="1"/>
<rect x="761.5" y="939.5" width="44" height="15" fill="#fff" stroke="#c55a11" stroke-width="1"/>
<text x="764.4" y="951.0" font-size="11" fill="#c55a11" textLength="38.7" lengthAdjust="spacingAndGlyphs">1385.52</text>
<line x1="800.0" y1="962.7" x2="807.5" y2="955.5" stroke="#c55a11" stroke-width="1"/>
<rect x="807.5" y="940.5" width="38" height="15" fill="#fff" stroke="#c55a11" stroke-width="1"/>
<text x="810.4" y="952.0" font-size="11" fill="#c55a11" textLength="32.8" lengthAdjust="spacingAndGlyphs">957.52</text>
<line x1="845.1" y1="961.0" x2="852.5" y2="954.5" stroke="#c55a11" stroke-width="1"/>
<rect x="852.5" y="939.5" width="44" height="15" fill="#fff" stroke="#c55a11" stroke-width="1"/>
<text x="855.4" y="951.0" font-size="11" fill="#c55a11" textLength="38.7" lengthAdjust="spacingAndGlyphs">1847.29</text>
<line x1="890.1" y1="961.8" x2="897.5" y2="954.5" stroke="#c55a11" stroke-width="1"/>
<rect x="897.5" y="939.5" width="44" height="15" fill="#fff" stroke="#c55a11" stroke-width="1"/>
<text x="900.4" y="951.0" font-size="11" fill="#c55a11" textLength="38.7" lengthAdjust="spacingAndGlyphs">1417.65</text>
<line x1="935.1" y1="962.4" x2="942.5" y2="955.5" stroke="#c55a11" stroke-width="1"/>
<rect x="942.5" y="940.5" width="38" height="15" fill="#fff" stroke="#c55a11" stroke-width="1"/>
<text x="945.4" y="952.0" font-size="11" fill="#c55a11" textLength="32.8" lengthAdjust="spacingAndGlyphs">1100.9</text>
<line x1="980.2" y1="963.8" x2="987.5" y2="956.5" stroke="#c55a11" stroke-width="1"/>
<rect x="987.5" y="941.5" width="38" height="15" fill="#fff" stroke="#c55a11" stroke-width="1"/>
<text x="990.4" y="953.0" font-size="11" fill="#c55a11" textLength="32.8" lengthAdjust="spacingAndGlyphs">359.77</text>
<line x1="1025.2" y1="964.0" x2="1032.5" y2="957.5" stroke="#c55a11" stroke-width="1"/>
<rect x="1032.5" y="942.5" width="32" height="15" fill="#fff" stroke="#c55a11" stroke-width="1"/>
<text x="1035.4" y="954.0" font-size="11" fill="#c55a11" textLength="26.9" lengthAdjust="spacingAndGlyphs">263.9</text>
<line x1="1070.3" y1="964.0" x2="1077.5" y2="957.5" stroke="#c55a11" stroke-width="1"/>
<rect x="1077.5" y="942.5" width="38" height="15" fill="#fff" stroke="#c55a11" stroke-width="1"/>
<text x="1080.4" y="954.0" font-size="11" fill="#c55a11" textLength="32.8" lengthAdjust="spacingAndGlyphs">262.65</text>
<line x1="1115.3" y1="964.0" x2="1122.5" y2="957.5" stroke="#c55a11" stroke-width="1"/>
<rect x="1122.5" y="942.5" width="38" height="15" fill="#fff" stroke="#c55a11" stroke-width="1"/>
<text x="1125.4" y="954.0" font-size="11" fill="#c55a11" textLength="32.8" lengthAdjust="spacingAndGlyphs">254.16</text>
<line x1="1160.3" y1="964.0" x2="1167.5" y2="957.5" stroke="#c55a11" stroke-width="1"/>
<rect x="1167.5" y="942.5" width="38" height="15" fill="#fff" stroke="#c55a11" stroke-width="1"/>
<text x="1170.4" y="954.0" font-size="11" fill="#c55a11" textLength="32.8" lengthAdjust="spacingAndGlyphs">252.03</text>
<line x1="1205.4" y1="964.0" x2="1212.5" y2="957.5" stroke="#c55a11" stroke-width="1"/>
<rect x="1212.5" y="942.5" width="38" height="15" fill="#fff" stroke="#c55a11" stroke-width="1"/>
<text x="1215.4" y="954.0" font-size="11" fill="#c55a11" textLength="32.8" lengthAdjust="spacingAndGlyphs">250.03</text>
<line x1="1250.4" y1="964.0" x2="1257.5" y2="957.5" stroke="#c55a11" stroke-width="1"/>
<rect x="1257.5" y="942.5" width="38" height="15" fill="#fff" stroke="#c55a11" stroke-width="1"/>
<text x="1260.4" y="954.0" font-size="11" fill="#c55a11" textLength="32.8" lengthAdjust="spacingAndGlyphs">268.65</text>
<rect x="655.5" y="1047.5" width="109" height="21" fill="#fff" stroke="#b4b4b4"/>
<path d="M659.3,1055.5 C659.3,1051.5 664,1050.5 665.5,1053" fill="none" stroke="#5b9bd5" stroke-width="1.3"/>
<circle cx="668.4" cy="1057.4" r="4.4" fill="#5b9bd5"/>
<path d="M671.3,1062 C673,1065.5 678,1064.5 677.6,1060.2" fill="none" stroke="#5b9bd5" stroke-width="1.3"/>
<text x="682" y="1062" font-size="13" fill="#333">当日</text>
<path d="M713,1055.5 C713,1051.5 718,1050.5 719.5,1053.5" fill="none" stroke="#ed7d31" stroke-width="1.1" stroke-dasharray="1.2 0.8"/>
<polygon points="722.5,1052.6 717.9,1060 727.1,1060" fill="#ed7d31"/>
<path d="M725,1062 C726.5,1065.5 731.5,1065 731.5,1060.2" fill="none" stroke="#ed7d31" stroke-width="1.1" stroke-dasharray="1.2 0.8"/>
<text x="735.5" y="1062" font-size="13" fill="#333">昨日</text>
</svg>

<!-- right cards -->
<div class="a" style="left:1338px;top:641px;width:582px;height:439px;border:1px solid #d4d4d4;background:#fff"></div>
<div class="a card" style="left:1352px;top:655px;width:554px;height:134px"><div class="lbl">当日用电</div></div>
<div class="a" style="right:74px;top:745px;font-size:34px;line-height:44px;color:#333;white-space:nowrap;transform:scaleX(0.95);transform-origin:right">10660.8</div>
<div class="a" style="left:1856px;top:766px;font-size:17px;line-height:22px;transform:scaleX(0.95);transform-origin:left;color:#333;white-space:nowrap">kW·h</div>
<div class="a card" style="left:1352px;top:793px;width:554px;height:132px"><div class="lbl">昨日同期</div></div>
<div class="a" style="right:74px;top:881px;font-size:34px;line-height:44px;color:#333;white-space:nowrap;transform:scaleX(0.95);transform-origin:right">1049148.5</div>
<div class="a" style="left:1856px;top:902px;font-size:17px;line-height:22px;transform:scaleX(0.95);transform-origin:left;color:#333;white-space:nowrap">kW·h</div>
<div class="a card" style="left:1352px;top:930px;width:554px;height:136px"><div class="lbl">环比</div></div>
<svg class="a" style="left:1689px;top:990px" width="50" height="50" viewBox="0 0 50 50"><circle cx="25" cy="25" r="21.5" fill="#fff" stroke="#b8dc78" stroke-width="4.9"/><path d="M19.2,14.3 L29.9,14.3 L29.9,25 L38,25 L25.3,38 L11.7,25 L19.2,25 Z" fill="#78a22e"/></svg>
<div class="a" style="left:1767px;top:965px;font-size:25px;line-height:32px;color:#1a9be6;white-space:nowrap;transform:scaleX(0.96);transform-origin:left">-1038487.7</div>
<div class="a" style="left:1856px;top:995px;font-size:17px;line-height:22px;transform:scaleX(0.95);transform-origin:left;color:#1a9be6;white-space:nowrap">kW·h</div>
<div class="a" style="left:1772px;top:1020px;width:131px;height:0;border-top:1px dotted #7ab8e8"></div>
<div class="a" style="left:1788px;top:1024px;font-size:33.5px;line-height:40px;color:#0a96f0;white-space:nowrap">-99.0%</div>
</body></html>
